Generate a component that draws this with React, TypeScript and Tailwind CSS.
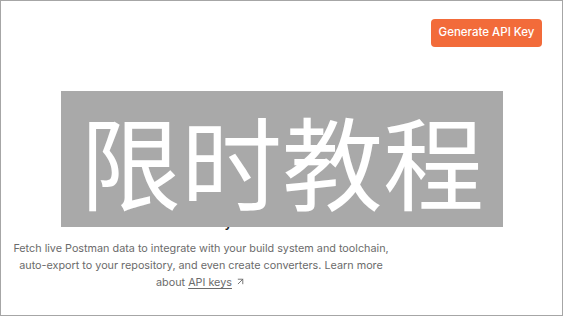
import { ArrowUpRight } from "lucide-react";

export default function App() {
  return (
    <div
      className="relative flex h-[316px] w-[563px] flex-col overflow-hidden border border-[#a6a6a6] bg-white"
      style={{ fontFamily: "Inter, 'Noto Sans CJK SC', sans-serif" }}
    >
      <div className="flex justify-end pr-[20px] pt-[18px]">
        <button className="h-[28px] w-[111px] rounded-[4px] bg-[#f26b3a] text-[11.5px] font-medium text-white">
          Generate API Key
        </button>
      </div>

      <div className="flex w-[400px] flex-col items-center pt-[166px] text-center">
        <h2 className="text-[13px] font-semibold leading-[18px] text-[#212121]">
          No API Keys
        </h2>
        <p className="mt-[9px] text-[10.8px] leading-[17px] text-[#6b6b6b]">
          Fetch live Postman data to integrate with your build system and toolchain,
          <br />
          auto-export to your repository, and even create converters. Learn more
          <br />
          about{" "}
          <a className="underline underline-offset-2 text-[#6b6b6b]" href="#">
            API keys
          </a>{" "}
          <ArrowUpRight className="inline h-[11px] w-[11px] align-[-1px]" />
        </p>
      </div>

      <div className="absolute left-[60px] top-[90px] flex h-[136px] w-[442px] items-center justify-center bg-[#a9a9a9]">
        <span
          className="text-[101px] leading-none text-white"
          style={{ fontFamily: "'Noto Sans CJK SC', sans-serif" }}
        >
          限时教程
        </span>
      </div>
    </div>
  );
}
